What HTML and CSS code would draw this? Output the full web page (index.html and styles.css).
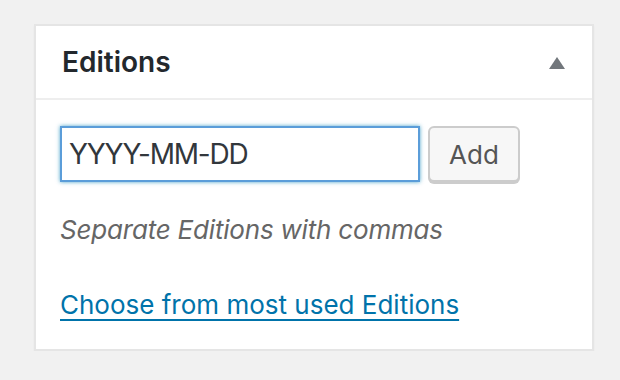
FILE: index.html
```html
<!DOCTYPE html>
<html lang="en">
  <head>
    <meta charset="UTF-8" />
    <title>Editions</title>
    <link rel="stylesheet" href="styles.css">
  </head>
  <body>
    <div class="postbox">
      <div class="postbox-header">
        <h2 class="hndle">Editions</h2>
        <button class="toggle" aria-label="Toggle panel">
          <svg width="16" height="12" viewBox="0 0 16 12"><polygon points="8,0 16,12 0,12" fill="#72777c" /></svg>
        </button>
      </div>

      <div class="inside">
        <div class="tag-row">
          <input type="text" class="tag-input" value="YYYY-MM-DD" />
          <button class="add-btn">Add</button>
        </div>
        <p class="howto">Separate Editions with commas</p>
        <a href="#" class="tagcloud-link">Choose from most used Editions</a>
      </div>
    </div>
  </body>
</html>
```

FILE: styles.css
```css
body {
  margin: 0;
  padding: 24px 0 0 34px;
  background-color: #f1f1f1;
  font-family: Inter, "Noto Sans", sans-serif;
}

.postbox {
  width: 560px;
  height: 327px;
  box-sizing: border-box;
  background-color: #fff;
  border: 2px solid #e5e5e5;
  box-shadow: 0 2px 2px rgba(0, 0, 0, 0.04);
}

.postbox-header {
  display: flex;
  align-items: center;
  justify-content: space-between;
  height: 72px;
  padding: 0 27px 0 26px;
  border-bottom: 2px solid #eee;
}

.hndle {
  margin: 0;
  font-size: 28px;
  font-weight: 600;
  color: #23282d;
}

.toggle {
  display: flex;
  padding: 0;
  border: none;
  background: none;
  margin-top: 2px;
}

.inside {
  padding: 26px 24px 0 24px;
}

.tag-row {
  display: flex;
  gap: 8px;
}

.tag-input {
  width: 360px;
  height: 56px;
  box-sizing: border-box;
  margin: 0;
  padding: 0 7px;
  font-family: inherit;
  font-size: 28px;
  letter-spacing: -1.2px;
  color: #32373c;
  border: 2px solid #5b9dd9;
  box-shadow: 0 0 4px rgba(30, 140, 190, 0.8);
  outline: none;
}

.add-btn {
  width: 92px;
  height: 56px;
  padding: 0;
  font-family: inherit;
  font-size: 26px;
  color: #555;
  background-color: #f7f7f7;
  border: 2px solid #ccc;
  border-radius: 6px;
  box-shadow: 0 2px 0 #ccc;
}

.howto {
  margin: 32px 0 0 0;
  font-size: 26px;
  font-style: italic;
  letter-spacing: -0.2px;
  color: #666;
}

.tagcloud-link {
  display: inline-block;
  margin-top: 44px;
  font-size: 26px;
  color: #0073aa;
  text-decoration-thickness: 2px;
  text-underline-offset: 5px;
}
```
